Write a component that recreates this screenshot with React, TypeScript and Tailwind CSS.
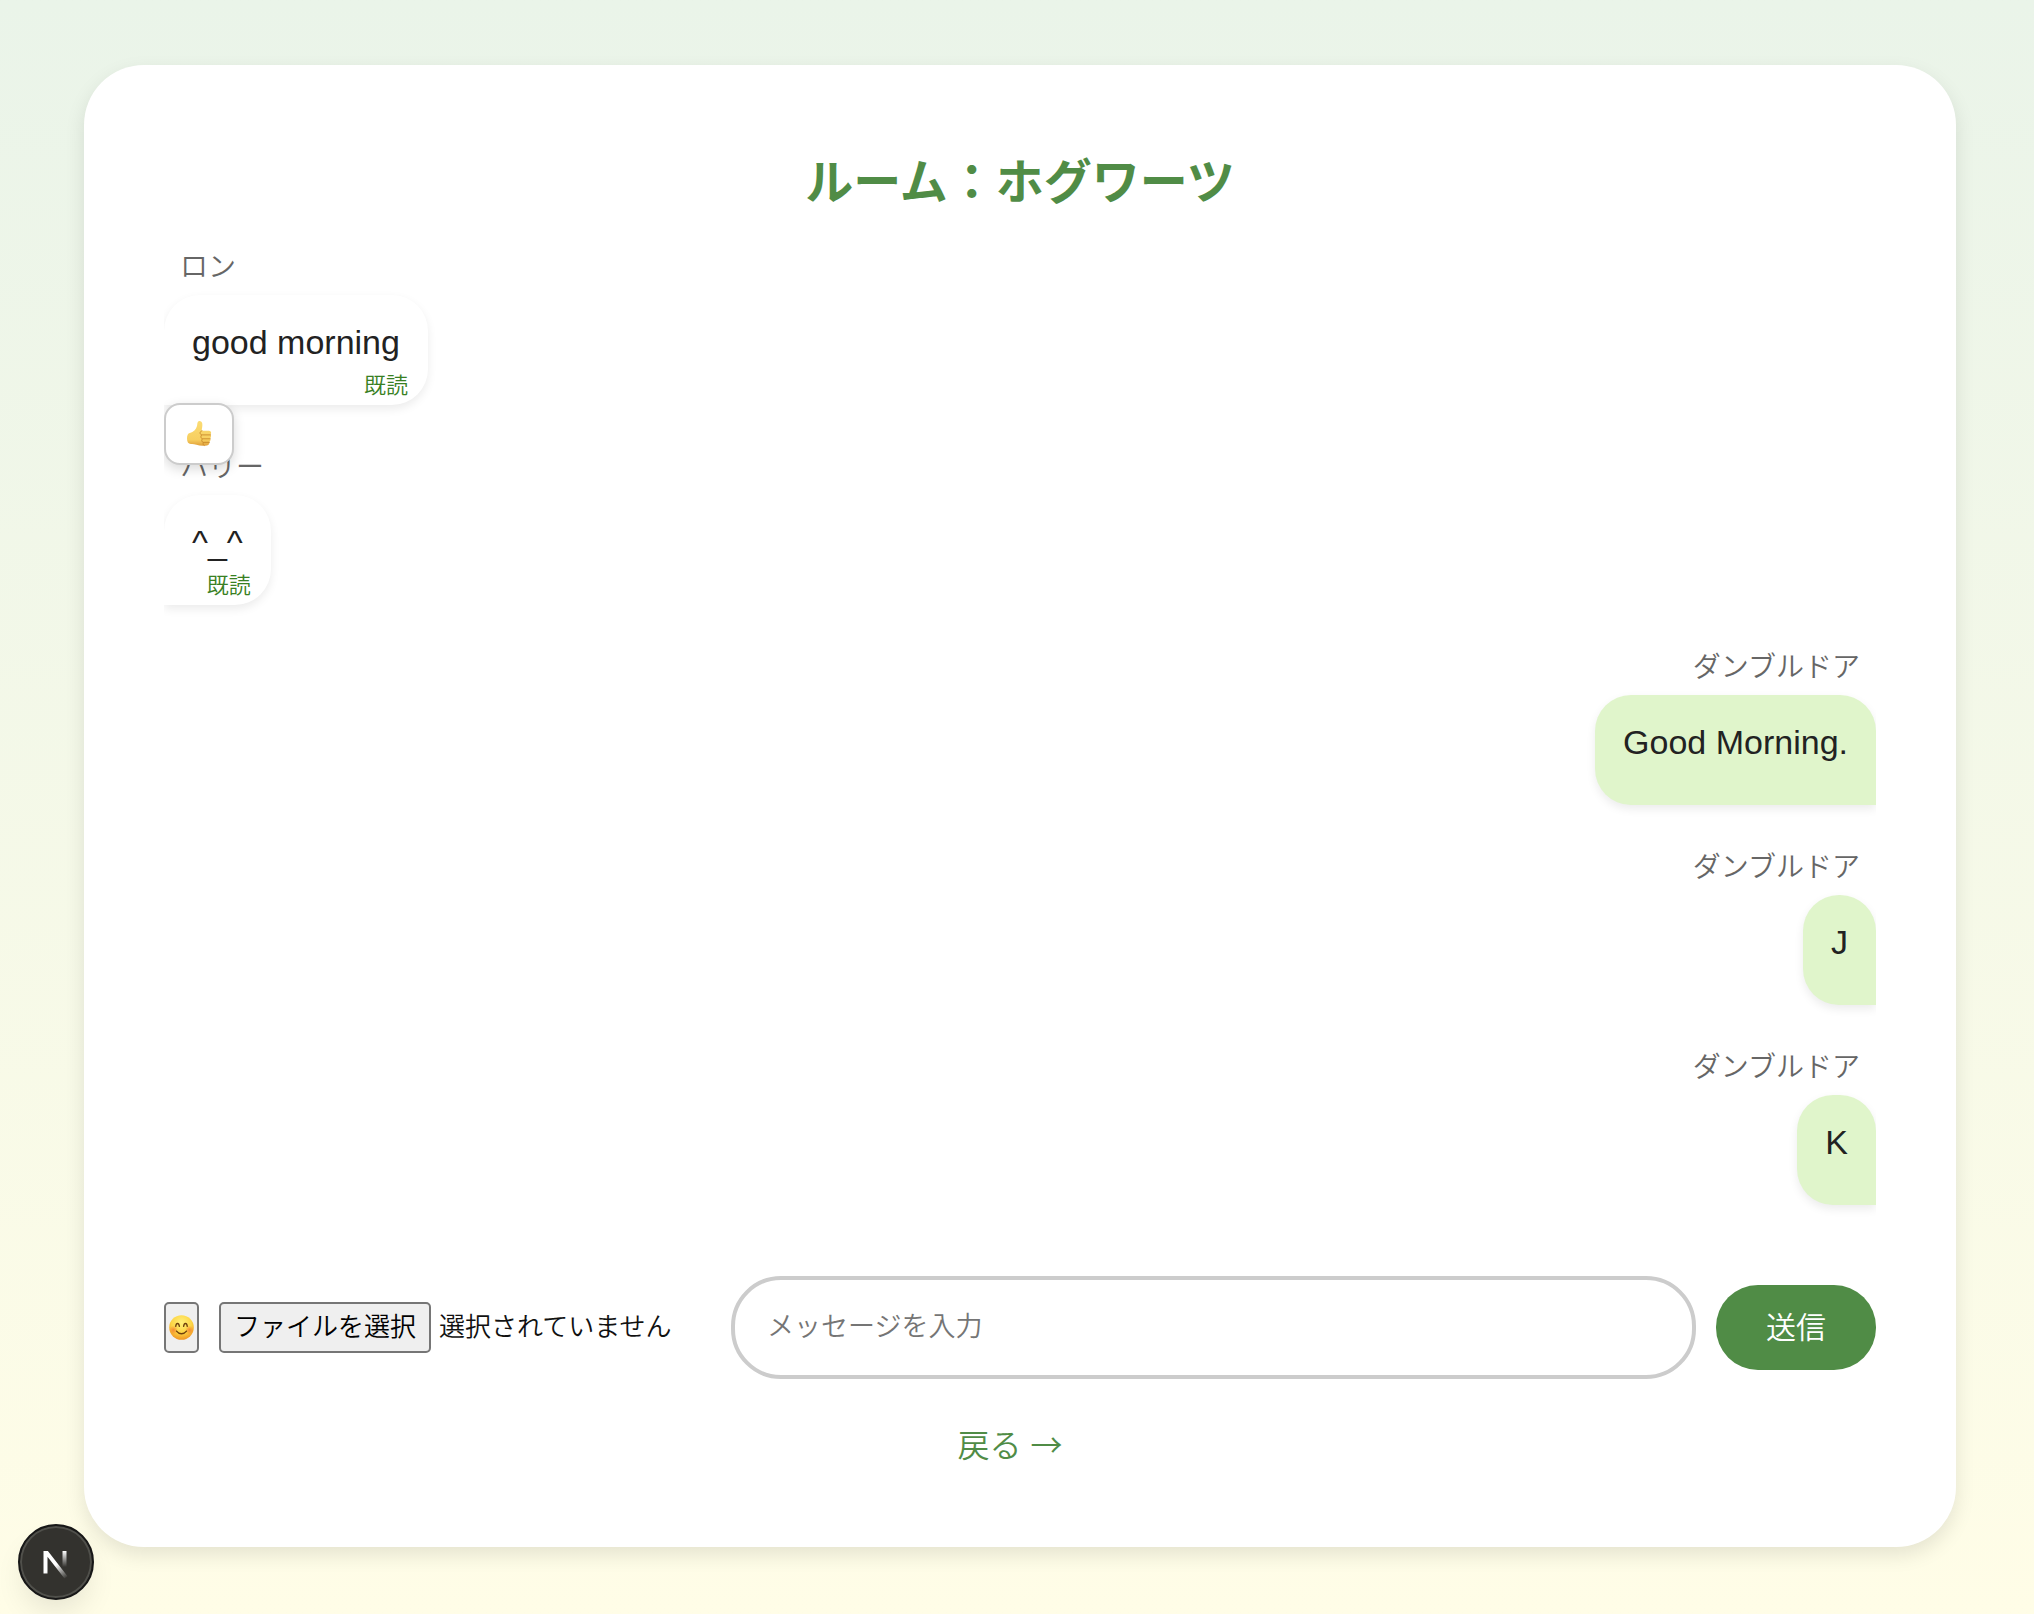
import { useState } from "react";

type Message = { id: number; sender: string; text: string; mine: boolean; read: boolean; liked?: boolean };

const messages: Message[] = [
  { id: 1, sender: "ロン", text: "good morning", mine: false, read: true, liked: true },
  { id: 2, sender: "ハリー", text: "^_^", mine: false, read: true },
  { id: 3, sender: "ダンブルドア", text: "Good Morning.", mine: true, read: false },
  { id: 4, sender: "ダンブルドア", text: "J", mine: true, read: false },
  { id: 5, sender: "ダンブルドア", text: "K", mine: true, read: false },
];

function ThumbsUp() {
  return (
    <svg viewBox="0 0 26 28" className="h-7 w-[26px]" aria-hidden="true">
      <defs>
        <linearGradient id="thumb" x1="0" y1="0" x2="0" y2="1">
          <stop offset="0" stopColor="#fbdc74" />
          <stop offset="0.75" stopColor="#f7cf60" />
          <stop offset="1" stopColor="#e0a03a" />
        </linearGradient>
      </defs>
      <path
        d="M12.300 1.400c1.700-1 3.700.2 4 2.400.3 2.500-.4 4.600-.6 7h7.300c2.300 0 2.800 2.900 1.300 3.800 1.100 1 1 3-.3 3.700.9 1.200.5 3-.8 3.600.5 1.600-.4 3.200-2.200 3.500-3.600.6-7.400.5-10.600-.6-2-.7-3.400-.9-5.200-.8C2.300 24.200 1 22 1 18.600c0-3.300.9-5.200 2.800-5.600C7.600 12.200 10 9.600 11 6c.3-1.400.2-3.900 1.300-4.600z"
        fill="url(#thumb)"
      />
      <path
        d="M16 10.800c-1.500.4-2.200 1.500-1.900 2.600.3 1.200 1.500 1.500 2.500 1.500h8M15.500 15c-1.300 1.300-.7 3.500 1 3.800h7.800M16.200 19c-1 1.300-.5 3 1 3.400h6.200M17.400 22.500c-.8 1.200-.3 2.600.8 3"
        fill="none"
        stroke="#c98a2b"
        strokeWidth="0.900"
        strokeLinecap="round"
      />
    </svg>
  );
}

function Smile() {
  return (
    <svg viewBox="0 0 26 26" className="size-[25px]" aria-hidden="true">
      <defs>
        <radialGradient id="face" cx="0.5" cy="0.3" r="0.75">
          <stop offset="0" stopColor="#fff07a" />
          <stop offset="0.55" stopColor="#fdd544" />
          <stop offset="1" stopColor="#ee8a1c" />
        </radialGradient>
        <radialGradient id="cheek">
          <stop offset="0" stopColor="#f2642d" stopOpacity="0.65" />
          <stop offset="1" stopColor="#f2642d" stopOpacity="0" />
        </radialGradient>
      </defs>
      <circle cx="13" cy="13" r="12.800" fill="url(#face)" />
      <circle cx="4.800" cy="15.500" r="4.500" fill="url(#cheek)" />
      <circle cx="21.200" cy="15.500" r="4.500" fill="url(#cheek)" />
      <path d="M7 11.800c.5-4 3.200-4 3.800 0M15.200 11.800c.6-4 3.300-4 3.800 0M7.800 16.800c2.800 3.600 7.600 3.600 10.400 0" fill="none" stroke="#6d3f0c" strokeWidth="1.400" strokeLinecap="round" />
    </svg>
  );
}

function MessageItem({ message }: { message: Message }) {
  const { sender, text, mine, read, liked } = message;
  return (
    <li className={mine ? "flex flex-col items-end" : "flex flex-col items-start"}>
      <span className="mb-1.5 px-4 text-[28px] leading-[42px] text-[#666]">{sender}</span>
      <div
        className={
          mine
            ? "relative rounded-[36px] rounded-br-none bg-[#e0f5cb] px-7 pt-[22px] pb-[38px] shadow-[0_4px_10px_rgba(0,0,0,0.08)]"
            : "relative rounded-[36px] rounded-bl-none bg-white px-7 pt-[22px] pb-[38px] shadow-[0_4px_10px_rgba(0,0,0,0.08)]"
        }
      >
        <p className="text-[34px] leading-[50px] text-[#222]">{text}</p>
        {read && <span className="absolute right-5 bottom-[3px] text-[22px] leading-8 text-[#388022]">既読</span>}
        {liked && (
          <button
            type="button"
            aria-label="いいね"
            className="absolute top-[108px] left-0 z-10 flex h-[62px] w-[70px] items-center justify-center rounded-2xl border-2 border-[#ccc] bg-white shadow-[0_4px_12px_rgba(0,0,0,0.15)]"
          >
            <ThumbsUp />
          </button>
        )}
      </div>
    </li>
  );
}

function DevBadge() {
  return (
    <button
      type="button"
      aria-label="Next.js"
      className="fixed bottom-[14px] left-[18px] flex size-[76px] items-center justify-center rounded-full border-2 border-[#171717] bg-[#33322e] shadow-[0_16px_32px_-8px_rgba(0,0,0,0.12)] inset-ring-2 inset-ring-[#50504b]"
    >
      <svg viewBox="0 0 40 40" className="size-10" fill="none" aria-hidden="true">
        <defs>
          <linearGradient id="stem" x1="29" y1="9" x2="29" y2="25" gradientUnits="userSpaceOnUse">
            <stop stopColor="white" />
            <stop offset="1" stopColor="white" stopOpacity="0" />
          </linearGradient>
          <linearGradient id="slash" x1="21" y1="22" x2="31" y2="36" gradientUnits="userSpaceOnUse">
            <stop stopColor="white" />
            <stop offset="1" stopColor="white" stopOpacity="0" />
          </linearGradient>
        </defs>
        <path d="M26.500 9h4v16h-4z" fill="url(#stem)" />
        <path d="M7.500 31.500V9h4.400l19.600 25.200-3 2.300L11.500 14.800v16.700z" fill="url(#slash)" />
      </svg>
    </button>
  );
}

export default function App() {
  const [draft, setDraft] = useState("");
  const [fileName, setFileName] = useState("選択されていません");

  return (
    <div className="min-h-screen bg-linear-to-b from-[#eaf4e9] to-[#fffde7] pt-[65px] pr-[78px] pb-[66px] pl-[84px] font-['Liberation_Sans','Noto_Sans_CJK_JP',sans-serif] font-[350]">
      <main className="rounded-[60px] bg-white p-20 shadow-[0_8px_20px_rgba(0,0,0,0.1)]">
        <h1 className="mb-[26px] text-center text-5xl leading-[76px] font-bold text-[#508c46]">ルーム：ホグワーツ</h1>

        <ul className="flex flex-col gap-[42px] overflow-hidden pb-10">
          {messages.map((message) => (
            <MessageItem key={message.id} message={message} />
          ))}
        </ul>

        <form className="mt-[31px] flex items-center gap-5" onSubmit={(e) => e.preventDefault()}>
          <button type="button" aria-label="絵文字" className="flex h-[51px] w-[35px] shrink-0 items-center justify-center rounded-[5px] border-2 border-[#767676] bg-[#efefef]">
            <Smile />
          </button>
          <div className="w-[492px] shrink-0 text-[26px] leading-[47px] text-black">
            <input
              id="file"
              type="file"
              className="sr-only"
              onChange={(e) => setFileName(e.target.files?.[0]?.name ?? "選択されていません")}
            />
            <label htmlFor="file" className="flex items-center gap-2">
              <span className="rounded-[5px] border-2 border-[#767676] bg-[#efefef] px-[13px]">ファイルを選択</span>
              <span className="text-[#111]">{fileName}</span>
            </label>
          </div>
          <input
            type="text"
            aria-label="メッセージを入力"
            placeholder="メッセージを入力"
            value={draft}
            onChange={(e) => setDraft(e.target.value)}
            className="h-[103px] min-w-0 flex-1 rounded-[50px] border-4 border-[#ccc] bg-white px-8 text-[27px] text-[#222] placeholder:text-[#757575]"
          />
          <button type="submit" className="w-40 shrink-0 rounded-[42px] bg-[#508c46] py-5 text-[30px] leading-[45px] text-white">
            送信
          </button>
        </form>

        <div className="mt-10 flex justify-center pr-5">
          <a href="#rooms" className="h-12 text-[32px] leading-[48px] text-[#508c46]">
            戻る <span className="font-['Noto_Sans_CJK_JP',sans-serif]">→</span>
          </a>
        </div>
      </main>
      <DevBadge />
    </div>
  );
}
